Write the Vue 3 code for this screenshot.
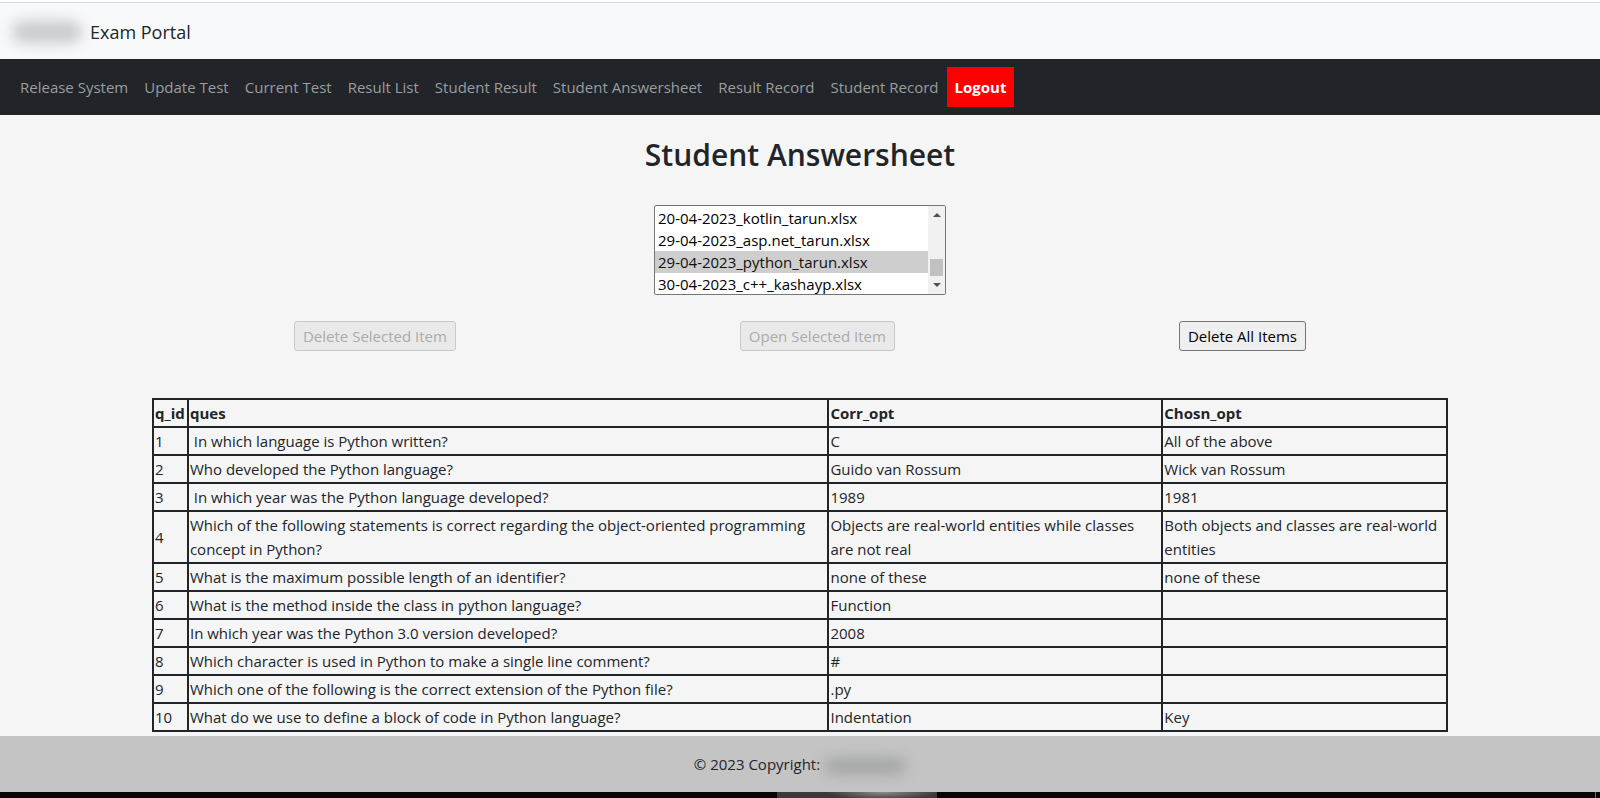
<script setup>
import { ref } from 'vue'

const links = ['Release System', 'Update Test', 'Current Test', 'Result List', 'Student Result', 'Student Answersheet', 'Result Record', 'Student Record']
const files = ['20-04-2023_kotlin_tarun.xlsx', '29-04-2023_asp.net_tarun.xlsx', '29-04-2023_python_tarun.xlsx', '30-04-2023_c++_kashayp.xlsx']
const selected = ref(files[2])
const columns = ['q_id', 'ques', 'Corr_opt', 'Chosn_opt']
const rows = [
  ['1', '\u00a0In which language is Python written?', 'C', 'All of the above'],
  ['2', 'Who developed the Python language?', 'Guido van Rossum', 'Wick van Rossum'],
  ['3', '\u00a0In which year was the Python language developed?', '1989', '1981'],
  ['4', 'Which of the following statements is correct regarding the object-oriented programming concept in Python?', 'Objects are real-world entities while classes are not real', 'Both objects and classes are real-world entities'],
  ['5', 'What is the maximum possible length of an identifier?', 'none of these', 'none of these'],
  ['6', 'What is the method inside the class in python language?', 'Function', ''],
  ['7', 'In which year was the Python 3.0 version developed?', '2008', ''],
  ['8', 'Which character is used in Python to make a single line comment?', '#', ''],
  ['9', 'Which one of the following is the correct extension of the Python file?', '.py', ''],
  ['10', 'What do we use to define a block of code in Python language?', 'Indentation', 'Key'],
]
</script>

<template>
  <div class="page">
    <header class="brand">
      <span class="smudge brand-smudge" aria-hidden="true"></span>
      <a href="#" class="brand-name">Exam Portal</a>
    </header>
    <nav class="nav">
      <a v-for="l in links" :key="l" href="#" class="nav-link">{{ l }}</a>
      <a href="#" class="nav-link logout">Logout</a>
    </nav>
    <main class="main">
      <h2 class="title">Student Answersheet</h2>
      <div class="picker">
        <select v-model="selected" class="files" size="4" aria-label="Answersheet file">
          <option v-for="f in files" :key="f" :value="f">{{ f }}</option>
        </select>
        <div class="scroll" aria-hidden="true">
          <svg class="arrow" viewBox="0 0 8 4"><path d="M0 4L4 0L8 4Z" /></svg>
          <span class="thumb"></span>
          <svg class="arrow" viewBox="0 0 8 4"><path d="M0 0L4 4L8 0Z" /></svg>
        </div>
      </div>
      <div class="actions">
        <button class="btn" type="button" disabled>Delete Selected Item</button>
        <button class="btn" type="button" disabled>Open Selected Item</button>
        <button class="btn" type="button">Delete All Items</button>
      </div>
      <table class="sheet">
        <colgroup>
          <col class="c-id" /><col class="c-ques" /><col class="c-corr" /><col class="c-chosen" />
        </colgroup>
        <thead>
          <tr><th v-for="c in columns" :key="c" scope="col">{{ c }}</th></tr>
        </thead>
        <tbody>
          <tr v-for="r in rows" :key="r[0]"><td v-for="(v, i) in r" :key="i">{{ v }}</td></tr>
        </tbody>
      </table>
    </main>
    <footer class="footer">
      <span>© 2023 Copyright:</span>
      <span class="smudge footer-smudge" aria-hidden="true"></span>
    </footer>
    <div class="strip" aria-hidden="true">
      <span class="strip-thumb"></span>
      <span class="strip-mark"></span>
    </div>
  </div>
</template>

<style>
body { margin: 0; background: #f5f5f5; }
</style>

<style scoped>
* { box-sizing: border-box; }
.page {
  font-family: "Segoe UI", "Open Sans", "Noto Sans", sans-serif;
  font-size: 15px;
  line-height: 24px;
  color: #212529;
  min-height: 100vh;
  display: flex;
  flex-direction: column;
  overflow: hidden;
}
a { color: inherit; text-decoration: none; }
.brand {
  display: flex;
  align-items: center;
  gap: 8px;
  height: 59px;
  padding: 4px 12px 0;
  background: linear-gradient(#fff 2px, #dadce0 2px, #dadce0 3px, #f8f9fa 3px);
}
.brand-name { font-size: 18px; line-height: 30px; }
.smudge { display: block; border-radius: 12px; filter: blur(7px); }
.brand-smudge { width: 70px; height: 22px; background: #c9cacb; }
.nav {
  display: flex;
  flex-wrap: wrap;
  padding: 8px 12px;
  background: #212529;
  color: #9b9d9e;
}
.nav-link { padding: 8px; }
.logout { background: #f00; color: #fff; font-weight: 700; }
.main { display: flex; flex-direction: column; align-items: center; flex: 1; padding: 21px 0 4px; }
.title { margin: 0 0 31px; font-size: 30px; line-height: 38px; font-weight: 600; }
.picker {
  display: flex;
  width: 292px;
  height: 90px;
  border: 1px solid #767676;
  border-radius: 2px;
  background: #fff;
  overflow: hidden;
}
.files {
  flex: 1;
  height: 88px;
  padding: 1px 0 0;
  border: 0;
  outline: 0;
  background: #fff;
  color: #000;
  font: inherit;
  scrollbar-width: none;
}
.files option { height: 22px; min-height: 22px; padding: 1px 3px 0; line-height: 22px; }
.scroll {
  display: flex;
  flex-direction: column;
  align-items: center;
  width: 17px;
  padding: 7px 0;
  background: #f1f1f1;
}
.arrow { width: 8px; height: 4px; fill: #505050; }
.thumb { width: 13px; height: 17px; margin: auto 0 7px; background: #c1c1c1; }
.actions { display: flex; justify-content: space-around; width: 81%; margin-top: 26px; }
.btn {
  height: 30px;
  padding: 0 8px;
  border: 1px solid #767676;
  border-radius: 3px;
  background: #efefef;
  color: #000;
  font: inherit;
}
.btn:disabled { border-color: #c9c9c9; background: #e9e9e9; color: #ababab; }
.sheet {
  width: 81%;
  margin-top: 47px;
  border-collapse: collapse;
  table-layout: fixed;
}
.c-id { width: 2.7%; }
.c-ques { width: 49.5%; }
.c-corr { width: 25.8%; }
.c-chosen { width: 22%; }
th, td { padding: 1px; border: 2px solid #212529; text-align: left; height: 28px; }
th { font-weight: 700; white-space: nowrap; }
.footer {
  display: flex;
  align-items: center;
  justify-content: center;
  gap: 4px;
  height: 56px;
  background: #c4c4c4;
}
.footer-smudge { width: 82px; height: 16px; margin-top: 4px; background: #a2a4a5; }
.strip { position: relative; display: flex; justify-content: center; height: 6px; background: #060606; }
.strip-thumb {
  width: 160px;
  margin-left: 114px;
  background: radial-gradient(ellipse 56px 8px at 106px 0, #8c8c8c, #3a3a3a);
}
.strip-mark { position: absolute; right: 4px; width: 1px; height: 6px; background: #6a6a6a; }
</style>
